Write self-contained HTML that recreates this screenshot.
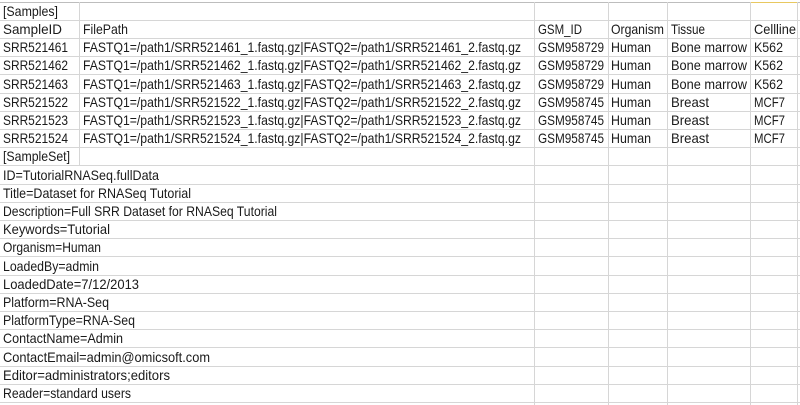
<!DOCTYPE html>
<html><head><style>
html,body{margin:0;padding:0;background:#fff;width:800px;height:405px;overflow:hidden}
svg text{font-family:"Liberation Sans",Arial,sans-serif;font-size:14px;fill:#1a1a1a}
</style></head><body>
<svg width="800" height="405" xmlns="http://www.w3.org/2000/svg">
<g stroke="#d6d6d6" stroke-width="1">
<line x1="0" y1="2.5" x2="800" y2="2.5" stroke="#bdbdbd"/>
<line x1="0" y1="20.5" x2="800" y2="20.5"/>
<line x1="0" y1="38.5" x2="800" y2="38.5"/>
<line x1="0" y1="56.5" x2="800" y2="56.5"/>
<line x1="0" y1="74.5" x2="800" y2="74.5"/>
<line x1="0" y1="93.5" x2="800" y2="93.5"/>
<line x1="0" y1="111.5" x2="800" y2="111.5"/>
<line x1="0" y1="129.5" x2="800" y2="129.5"/>
<line x1="0" y1="147.5" x2="800" y2="147.5"/>
<line x1="0" y1="165.5" x2="800" y2="165.5"/>
<line x1="0" y1="184.5" x2="800" y2="184.5"/>
<line x1="0" y1="202.5" x2="800" y2="202.5"/>
<line x1="0" y1="220.5" x2="800" y2="220.5"/>
<line x1="0" y1="238.5" x2="800" y2="238.5"/>
<line x1="0" y1="256.5" x2="800" y2="256.5"/>
<line x1="0" y1="275.5" x2="800" y2="275.5"/>
<line x1="0" y1="293.5" x2="800" y2="293.5"/>
<line x1="0" y1="311.5" x2="800" y2="311.5"/>
<line x1="0" y1="329.5" x2="800" y2="329.5"/>
<line x1="0" y1="347.5" x2="800" y2="347.5"/>
<line x1="0" y1="366.5" x2="800" y2="366.5"/>
<line x1="0" y1="384.5" x2="800" y2="384.5"/>
<line x1="0" y1="402.5" x2="800" y2="402.5"/>
<line x1="79.5" y1="2" x2="79.5" y2="166"/>
<line x1="534.5" y1="2" x2="534.5" y2="405"/>
<line x1="608.5" y1="2" x2="608.5" y2="405"/>
<line x1="667.5" y1="2" x2="667.5" y2="405"/>
<line x1="750.5" y1="2" x2="750.5" y2="405"/>
<line x1="797.5" y1="2" x2="797.5" y2="405"/>
</g>
<line x1="751" y1="2.5" x2="797" y2="2.5" stroke="#e8c860" stroke-width="1"/>
<g lengthAdjust="spacingAndGlyphs">
<text x="3" y="16" textLength="55" lengthAdjust="spacingAndGlyphs">[Samples]</text>
<text x="3" y="34" textLength="59" lengthAdjust="spacingAndGlyphs">SampleID</text><text x="83" y="34" textLength="45" lengthAdjust="spacingAndGlyphs">FilePath</text><text x="538" y="34" textLength="44" lengthAdjust="spacingAndGlyphs">GSM_ID</text><text x="611" y="34" textLength="53" lengthAdjust="spacingAndGlyphs">Organism</text><text x="671" y="34" textLength="34" lengthAdjust="spacingAndGlyphs">Tissue</text><text x="754" y="34" textLength="42" lengthAdjust="spacingAndGlyphs">Cellline</text>
</g>
<g id="rows"></g>
<text x="3" y="52" textLength="65" lengthAdjust="spacingAndGlyphs">SRR521461</text><text x="83" y="52" textLength="438" lengthAdjust="spacingAndGlyphs">FASTQ1=/path1/SRR521461_1.fastq.gz|FASTQ2=/path1/SRR521461_2.fastq.gz</text><text x="538" y="52" textLength="66" lengthAdjust="spacingAndGlyphs">GSM958729</text><text x="611" y="52" textLength="40" lengthAdjust="spacingAndGlyphs">Human</text><text x="671" y="52" textLength="76" lengthAdjust="spacingAndGlyphs">Bone marrow</text><text x="754" y="52" textLength="29" lengthAdjust="spacingAndGlyphs">K562</text>
<text x="3" y="70" textLength="65" lengthAdjust="spacingAndGlyphs">SRR521462</text><text x="83" y="70" textLength="438" lengthAdjust="spacingAndGlyphs">FASTQ1=/path1/SRR521462_1.fastq.gz|FASTQ2=/path1/SRR521462_2.fastq.gz</text><text x="538" y="70" textLength="66" lengthAdjust="spacingAndGlyphs">GSM958729</text><text x="611" y="70" textLength="40" lengthAdjust="spacingAndGlyphs">Human</text><text x="671" y="70" textLength="76" lengthAdjust="spacingAndGlyphs">Bone marrow</text><text x="754" y="70" textLength="29" lengthAdjust="spacingAndGlyphs">K562</text>
<text x="3" y="89" textLength="65" lengthAdjust="spacingAndGlyphs">SRR521463</text><text x="83" y="89" textLength="438" lengthAdjust="spacingAndGlyphs">FASTQ1=/path1/SRR521463_1.fastq.gz|FASTQ2=/path1/SRR521463_2.fastq.gz</text><text x="538" y="89" textLength="66" lengthAdjust="spacingAndGlyphs">GSM958729</text><text x="611" y="89" textLength="40" lengthAdjust="spacingAndGlyphs">Human</text><text x="671" y="89" textLength="76" lengthAdjust="spacingAndGlyphs">Bone marrow</text><text x="754" y="89" textLength="29" lengthAdjust="spacingAndGlyphs">K562</text>
<text x="3" y="107" textLength="65" lengthAdjust="spacingAndGlyphs">SRR521522</text><text x="83" y="107" textLength="438" lengthAdjust="spacingAndGlyphs">FASTQ1=/path1/SRR521522_1.fastq.gz|FASTQ2=/path1/SRR521522_2.fastq.gz</text><text x="538" y="107" textLength="66" lengthAdjust="spacingAndGlyphs">GSM958745</text><text x="611" y="107" textLength="40" lengthAdjust="spacingAndGlyphs">Human</text><text x="671" y="107" textLength="38" lengthAdjust="spacingAndGlyphs">Breast</text><text x="754" y="107" textLength="31" lengthAdjust="spacingAndGlyphs">MCF7</text>
<text x="3" y="125" textLength="65" lengthAdjust="spacingAndGlyphs">SRR521523</text><text x="83" y="125" textLength="438" lengthAdjust="spacingAndGlyphs">FASTQ1=/path1/SRR521523_1.fastq.gz|FASTQ2=/path1/SRR521523_2.fastq.gz</text><text x="538" y="125" textLength="66" lengthAdjust="spacingAndGlyphs">GSM958745</text><text x="611" y="125" textLength="40" lengthAdjust="spacingAndGlyphs">Human</text><text x="671" y="125" textLength="38" lengthAdjust="spacingAndGlyphs">Breast</text><text x="754" y="125" textLength="31" lengthAdjust="spacingAndGlyphs">MCF7</text>
<text x="3" y="143" textLength="65" lengthAdjust="spacingAndGlyphs">SRR521524</text><text x="83" y="143" textLength="438" lengthAdjust="spacingAndGlyphs">FASTQ1=/path1/SRR521524_1.fastq.gz|FASTQ2=/path1/SRR521524_2.fastq.gz</text><text x="538" y="143" textLength="66" lengthAdjust="spacingAndGlyphs">GSM958745</text><text x="611" y="143" textLength="40" lengthAdjust="spacingAndGlyphs">Human</text><text x="671" y="143" textLength="38" lengthAdjust="spacingAndGlyphs">Breast</text><text x="754" y="143" textLength="31" lengthAdjust="spacingAndGlyphs">MCF7</text>
<text x="3" y="161" textLength="67" lengthAdjust="spacingAndGlyphs">[SampleSet]</text>
<text x="3" y="180" textLength="156" lengthAdjust="spacingAndGlyphs">ID=TutorialRNASeq.fullData</text>
<text x="3" y="198" textLength="188" lengthAdjust="spacingAndGlyphs">Title=Dataset for RNASeq Tutorial</text>
<text x="3" y="216" textLength="274" lengthAdjust="spacingAndGlyphs">Description=Full SRR Dataset for RNASeq Tutorial</text>
<text x="3" y="234" textLength="107" lengthAdjust="spacingAndGlyphs">Keywords=Tutorial</text>
<text x="3" y="252" textLength="98" lengthAdjust="spacingAndGlyphs">Organism=Human</text>
<text x="3" y="271" textLength="96" lengthAdjust="spacingAndGlyphs">LoadedBy=admin</text>
<text x="3" y="289" textLength="136" lengthAdjust="spacingAndGlyphs">LoadedDate=7/12/2013</text>
<text x="3" y="307" textLength="106" lengthAdjust="spacingAndGlyphs">Platform=RNA-Seq</text>
<text x="3" y="325" textLength="132" lengthAdjust="spacingAndGlyphs">PlatformType=RNA-Seq</text>
<text x="3" y="343" textLength="120" lengthAdjust="spacingAndGlyphs">ContactName=Admin</text>
<text x="3" y="362" textLength="207" lengthAdjust="spacingAndGlyphs">ContactEmail=admin@omicsoft.com</text>
<text x="3" y="380" textLength="167" lengthAdjust="spacingAndGlyphs">Editor=administrators;editors</text>
<text x="3" y="398" textLength="128" lengthAdjust="spacingAndGlyphs">Reader=standard users</text>
</svg>
</body></html>
